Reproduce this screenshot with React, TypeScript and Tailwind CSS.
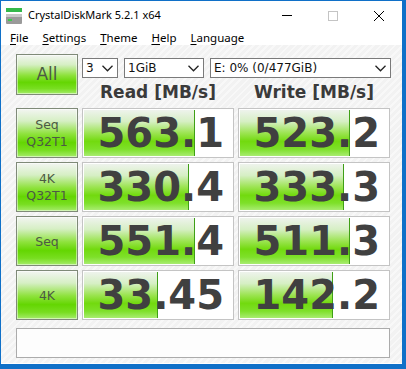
import React from "react"

const rows = [
  { label: ["Seq", "Q32T1"], read: "563.1", readW: 111, write: "523.2", writeW: 110 },
  { label: ["4K", "Q32T1"], read: "330.4", readW: 105, write: "333.3", writeW: 104 },
  { label: ["Seq"], read: "551.4", readW: 111, write: "511.3", writeW: 110 },
  { label: ["4K"], read: "33.45", readW: 74, write: "142.2", writeW: 93 },
]

const menus = ["File", "Settings", "Theme", "Help", "Language"]

function Chevron() {
  return (
    <svg width="11" height="7" viewBox="0 0 11 7" className="shrink-0">
      <path d="M0.5 0.8 L5.5 5.8 L10.5 0.8" fill="none" stroke="#222" strokeWidth="1.3" />
    </svg>
  )
}

function Combo({ text, width }: { text: string; width: string }) {
  return (
    <div
      className={`flex h-[20px] ${width} items-center justify-between border border-[#7a7a7a] bg-white pl-[3px] pr-[4px] text-[12px] text-[#111]`}
    >
      <span>{text}</span>
      <Chevron />
    </div>
  )
}

function ValueBox({ value, fill }: { value: string; fill: number }) {
  return (
    <div className="relative h-[50px] w-[152px] border border-[#c4c4c4] bg-white p-px">
      <div
        className="h-full border-r border-[#3f9f16] bg-[linear-gradient(to_bottom,#eef3ec_0%,#d6efc4_25%,#9ce452_50%,#72da0e_68%,#7ee02a_85%,#a8ec70_100%)]"
        style={{ width: fill }}
      />
      <div className="absolute inset-0 flex items-center justify-end pr-[9px] text-[40px] font-bold leading-none text-[#404040]">
        {value}
      </div>
    </div>
  )
}

function GreenButton({ children, className }: { children: React.ReactNode; className: string }) {
  return (
    <div
      className={`flex w-[62px] flex-col items-center justify-center border border-[#7f8a78] bg-[linear-gradient(to_bottom,#f3f5f2_0%,#d6efc4_25%,#8ee23c_52%,#64d602_70%,#78de20_86%,#a6ec6c_100%)] text-[#4c5a44] shadow-[inset_0_0_0_1px_rgba(255,255,255,0.5)] ${className}`}
    >
      {children}
    </div>
  )
}

export default function App() {
  return (
    <div className="h-[369px] w-[406px] overflow-hidden border-b-[5px] border-l border-r-[4px] border-t border-[#1070c8] bg-white font-['DejaVu_Sans',sans-serif]">
      {/* title bar */}
      <div className="flex h-[29px] items-center bg-white">
        <svg width="16" height="16" viewBox="0 0 16 16" className="ml-[5px]">
          <rect x="0" y="0" width="16" height="4" fill="#33b84a" />
          <rect x="0" y="6" width="16" height="10" rx="1" fill="#9a9a9a" />
          <rect x="0" y="6" width="16" height="3" fill="#c8c8c8" />
          <rect x="2" y="11" width="4" height="2" fill="#3ccc4c" />
        </svg>
        <span className="ml-[6px] font-['Noto_Sans',sans-serif] text-[11px] text-black">CrystalDiskMark 5.2.1 x64</span>
        <div className="ml-auto flex h-full items-center">
          <div className="flex h-full w-[46px] items-center justify-center">
            <div className="h-px w-[10px] bg-black" />
          </div>
          <div className="flex h-full w-[46px] items-center justify-center">
            <div className="h-[10px] w-[10px] border border-[#c4c4c4]" />
          </div>
          <div className="flex h-full w-[46px] items-center justify-center">
            <svg width="10" height="10" viewBox="0 0 10 10">
              <path d="M0 0 L10 10 M10 0 L0 10" stroke="#000" strokeWidth="1" />
            </svg>
          </div>
        </div>
      </div>

      {/* menu bar */}
      <div className="flex h-[15px] items-center gap-[14px] bg-white pl-[9px] font-['Noto_Sans',sans-serif] text-[11.5px] leading-none text-black">
        {menus.map((m) => (
          <span key={m}>
            <span className="underline underline-offset-2">{m[0]}</span>
            {m.slice(1)}
          </span>
        ))}
      </div>

      {/* client area */}
      <div className="h-[318px] bg-[repeating-linear-gradient(135deg,#f2f2f2_0px,#f2f2f2_3px,#f8f8f8_3px,#f8f8f8_5px)] pl-[15px] pt-[9px]">
        <div className="flex gap-[4px]">
          <GreenButton className="h-[41px] text-[17px]">All</GreenButton>
          <div className="flex flex-col">
            <div className="mt-[4px] flex gap-[6px]">
              <Combo text="3" width="w-[36px]" />
              <Combo text="1GiB" width="w-[80px]" />
              <Combo text="E: 0% (0/477GiB)" width="w-[181px]" />
            </div>
            <div className="mt-[6px] flex gap-[4px] text-[17px] font-bold leading-none text-[#3a3a3a]">
              <div className="w-[152px] text-center">Read [MB/s]</div>
              <div className="w-[152px] text-center">Write [MB/s]</div>
            </div>
          </div>
        </div>

        <div className="mt-[7px] flex flex-col gap-[4px]">
          {rows.map((r) => (
            <div key={r.read} className="flex gap-[4px]">
              <GreenButton className="h-[50px] text-[12.5px] leading-[17px]">
                {r.label.map((l) => (
                  <span key={l}>{l}</span>
                ))}
              </GreenButton>
              <ValueBox value={r.read} fill={r.readW} />
              <ValueBox value={r.write} fill={r.writeW} />
            </div>
          ))}
        </div>

        <div className="mt-[8px] h-[30px] w-[374px] border border-[#ababab] bg-[#fdfdfd]" />
      </div>
    </div>
  )
}
